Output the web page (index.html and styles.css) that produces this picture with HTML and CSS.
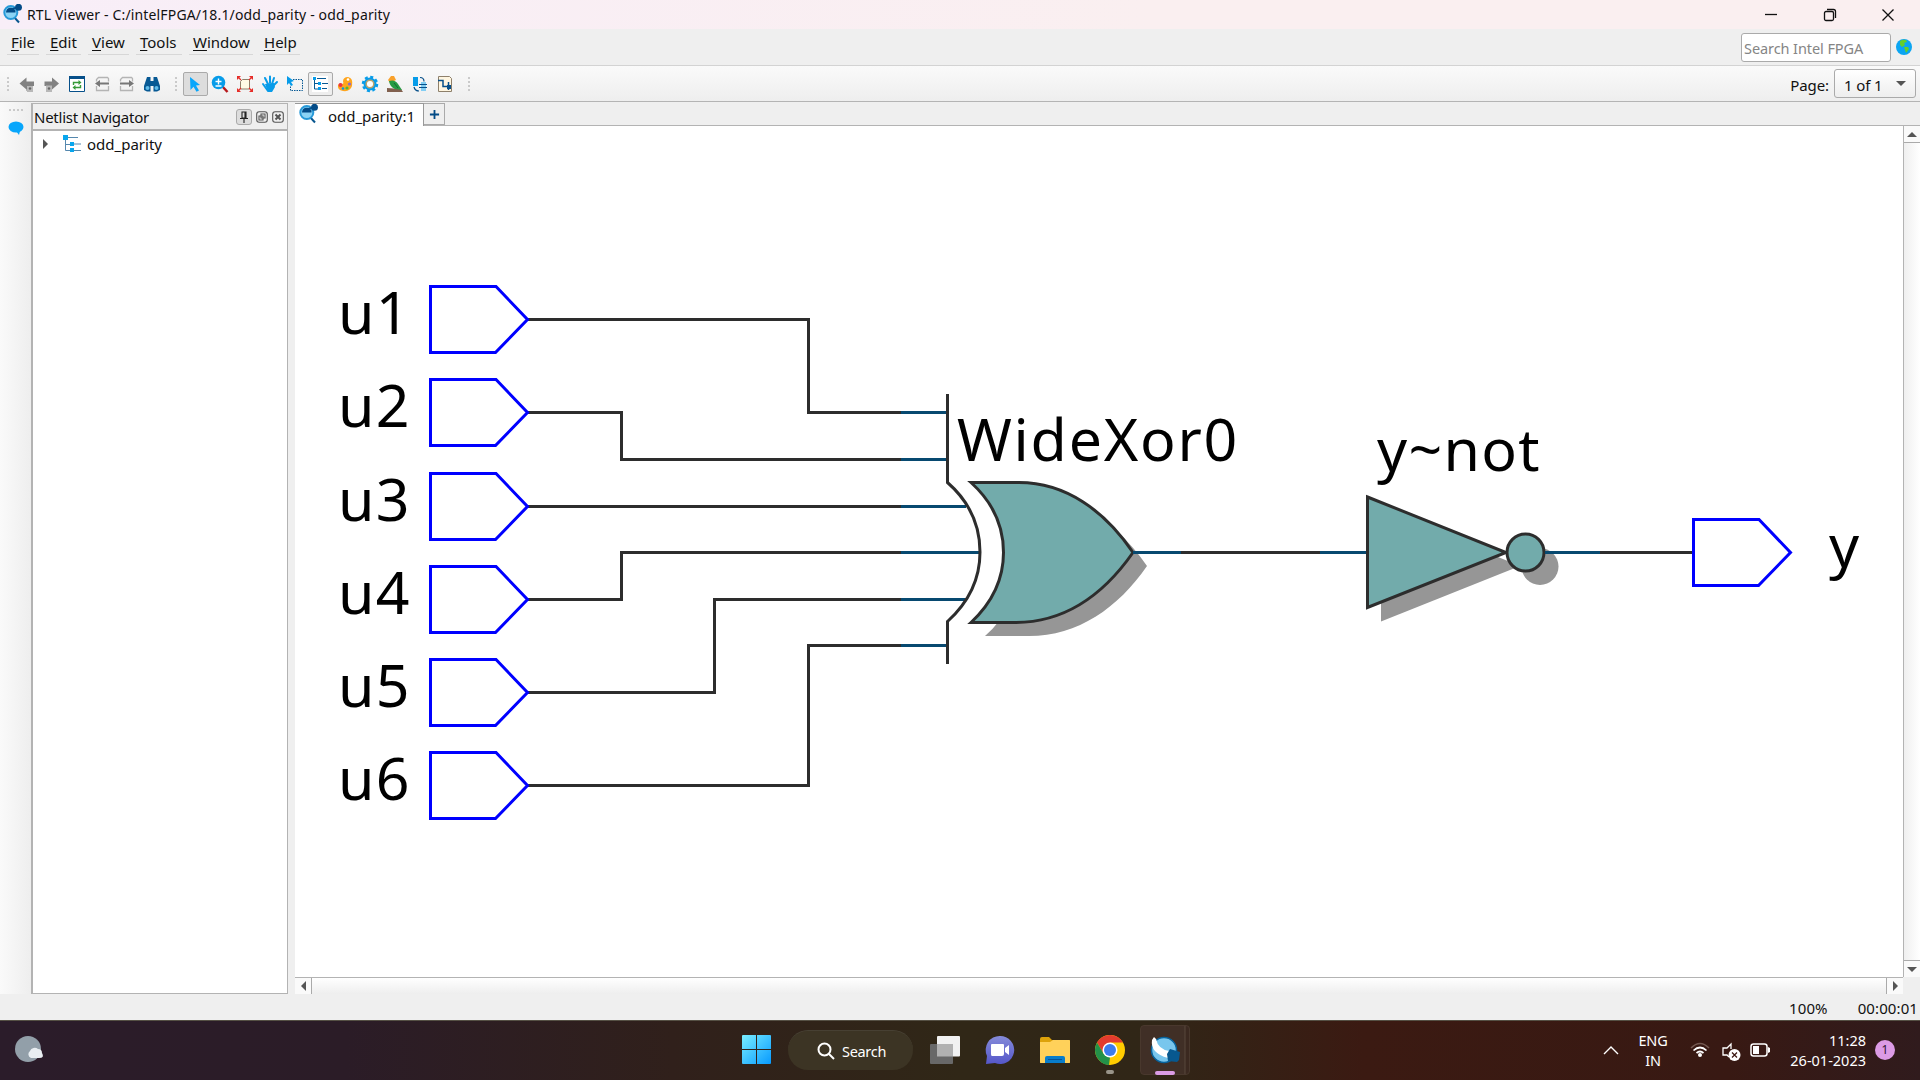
FILE: index.html
```html
<!DOCTYPE html>
<html lang="en">
<head>
<meta charset="utf-8">
<title>RTL Viewer</title>
<link rel="stylesheet" href="styles.css">
</head>
<body>
<svg class="defs" aria-hidden="true">
  <defs>
    <symbol id="viewer" viewBox="0 0 20 20">
      <path d="M11.500 12.500l5.500 6" stroke="#08568f" stroke-width="2"/>
      <circle cx="8.800" cy="8.500" r="6.500" fill="#8bd3f5" stroke="#2799d8" stroke-width="2"/>
      <path d="M4 8.500a5 5 0 0 1 9.500-2v2z" fill="#034b87"/>
      <path d="M10 5l6-2" stroke="#034b87" stroke-width="1.500"/>
      <circle cx="16.500" cy="3.300" r="3.500" fill="#034b87"/>
    </symbol>
    <symbol id="pin" viewBox="0 0 101 69">
      <path d="M1.500 1.500H67L98.500 34.500L66.500 67.500H1.500Z" fill="#fff" stroke="#00f" stroke-width="3"/>
    </symbol>
  </defs>
</svg>
<div class="window">
  <header class="titlebar">
    <svg class="app-icon"><use href="#viewer"/></svg>
    <span class="title">RTL Viewer - C:/intelFPGA/18.1/odd_parity - odd_parity</span>
    <div class="controls">
      <svg viewBox="0 0 14 14"><path d="M1 6.500h12"/></svg>
      <svg viewBox="0 0 14 14"><rect x="1.500" y="3.500" width="9" height="9" rx="1.500"/><path d="M4 1.500h6.500q2 0 2 2V10"/></svg>
      <svg viewBox="0 0 14 14"><path d="M1.500 1.500l11 11M12.500 1.500l-11 11"/></svg>
    </div>
  </header>
  <nav class="menubar">
    <span class="m-file"><u>F</u>ile</span><span class="m-edit"><u>E</u>dit</span><span class="m-view"><u>V</u>iew</span><span class="m-tools"><u>T</u>ools</span><span class="m-window"><u>W</u>indow</span><span class="m-help"><u>H</u>elp</span>
    <div class="search-box">Search Intel FPGA</div>
    <svg class="globe" viewBox="0 0 16 16"><circle cx="8" cy="8" r="8" fill="#0ba5f2"/><path d="M4 2q3-2 6-1l1 2-3 1 1 2-3 2-2-2zM8 8l4 0 1 2-3 4-1-3z" fill="#64cf2b"/></svg>
  </nav>
  <div class="toolbar">
    <i class="grip"></i>
    <div class="tools">
      <span><svg viewBox="0 0 20 20"><path d="M2.500 9.500l7-6v4H17v4.500h-3V17H9.500v-1.500z" fill="#828282"/><rect x="10" y="12" width="6" height="6" fill="#b8b8b8"/><circle cx="13" cy="14.500" r="1.200" fill="#666"/></svg></span>
      <span><svg viewBox="0 0 20 20"><path d="M17 9.500l-7-6v4H2.500v4.500H10v3.500z" fill="#828282"/><rect x="4" y="11.500" width="6" height="6.500" fill="#b8b8b8"/><circle cx="7" cy="14.500" r="1.200" fill="#666"/></svg></span>
      <span><svg viewBox="0 0 16 16"><path d="M.5.5h15v15H.5z" fill="#fff" stroke="#07508a"/><path d="M0 0h16v3H0z" fill="#07508a"/><path d="M4.500 9V6.500H11M11.500 9v2.500H5" fill="none" stroke="#379b39" stroke-width="1.400"/><path d="M9.500 4l3 2.500-3 2.500M6.500 9l-3 2.500 3 2.500" fill="#379b39"/></svg></span>
      <span><svg viewBox="0 0 20 20"><path d="M4.500 7.500v-2l2-2h9l1 1v3M4.500 12v4.500h12V12" fill="none" stroke="#b4b4b4" stroke-width="1.300"/><path d="M3 9.500L8 6v2.500h9v2H8V13z" fill="#777"/></svg></span>
      <span><svg viewBox="0 0 20 20"><path d="M3.500 7.500v-2l2-2h9l1 1v3M3.500 12v4.500h12V12" fill="none" stroke="#b4b4b4" stroke-width="1.300"/><path d="M17 9.500L12 6v2.500H3v2h9V13z" fill="#777"/></svg></span>
      <span><svg viewBox="0 0 20 20"><path d="M5 3h3.500v4h3V3H15l3 9v4l-3 1.500h-3.500V12h-3v5.500H5L2 16v-4z" fill="#075994"/><circle cx="5.500" cy="14" r="2" fill="#61bce9"/><circle cx="14.500" cy="14" r="2" fill="#61bce9"/></svg></span>
    </div>
    <i class="grip"></i>
    <div class="tools">
      <span class="pressed"><svg viewBox="0 0 20 20"><path d="M5 3l10 8-4 .5 3 5-2.500 1.300-3-5L5.500 16z" fill="#08a6fb"/></svg></span>
      <span><svg viewBox="0 0 20 20"><path d="M12 12l5.500 6" stroke="#b7191c" stroke-width="2.500"/><circle cx="8.500" cy="8.500" r="6.800" fill="#079ce9"/><path d="M5.500 7.500h6M8.500 4.500v6M5.500 12h6" stroke="#fff" stroke-width="1.400"/></svg></span>
      <span><svg viewBox="0 0 20 20"><path d="M7.500 5.500h7v9.500h-9V7.500z" fill="#fffbe5" stroke="#8e806b"/><path d="M2.500 2.500L6 6M17.500 2.500L14 6M2.500 17.500L6 14M17.500 17.500L14 14" stroke="#e62d28" stroke-width="1.200"/><path d="M2 6V2h4zM14 2h4v4zM2 14v4h4zM18 14v4h-4z" fill="#e62d28"/></svg></span>
      <span><svg viewBox="0 0 20 20"><path d="M8 17L3 10M8 10L5 4M10 9V2.500M12 10l2-6M12 13l5-5" stroke="#079ce9" stroke-width="2" stroke-linecap="round"/><path d="M5 10l9-1 1 4-3 5H8z" fill="#079ce9"/></svg></span>
      <span><svg viewBox="0 0 20 20"><path d="M8 5.500h9.500v11h-12V12" fill="none" stroke="#075994" stroke-dasharray="1.500 1"/><path d="M2 2l7 5-3 1 2 3-2 1-2-3-2 2z" fill="#079ce9"/></svg></span>
      <span class="pressed light"><svg viewBox="0 0 20 20"><path d="M2 2h16v16H2z" fill="#fff"/><path d="M4.500 5v10H9M4.500 9.500H9" fill="none" stroke="#075994"/><path d="M7 4.500h9M12 9.500h6M12 14.500h5" stroke="#075994" stroke-width="1.200"/><path d="M3 3h3v3H3zM8 8h3v3H8zM8 13h3v3H8z" fill="#079ce9"/></svg></span>
      <span><svg viewBox="0 0 20 20"><path d="M8 7.500q0-4.500 5-4.500 5.500 1 4 9-2 6-9 5-6-1-5-6 2-3 4-1 2 0 1-2.500" fill="#ffa51d"/><circle cx="5.500" cy="11" r="2" fill="#eb3445"/><circle cx="13" cy="5.500" r="1.300" fill="#fff"/><circle cx="14.500" cy="10" r="1.600" fill="#8b6ac9"/><circle cx="12" cy="14" r="1.600" fill="#4fb936"/><circle cx="8" cy="14.500" r="1.300" fill="#0797e6"/></svg></span>
      <span><svg viewBox="0 0 20 20"><circle cx="10" cy="10" r="6.500" fill="#079ce9"/><circle cx="10" cy="10" r="7" fill="none" stroke="#079ce9" stroke-width="2.500" stroke-dasharray="3 2.500"/><circle cx="10" cy="10" r="3.800" fill="#fff" stroke="#bfa36a" stroke-width="1.500"/></svg></span>
      <span><svg viewBox="0 0 20 20"><path d="M2 14l14 1 2 3H2z" fill="#81604e"/><path d="M3 6l3-4h3l2 4-6 3z" fill="#f9a12b"/><path d="M4 7q6-2 9 3l4 6-7-1q-5-2-6-8" fill="#269c43"/><path d="M9 9l4 5" stroke="#116a32"/></svg></span>
      <span><svg viewBox="0 0 20 20"><path d="M3 3h5v9H3z" fill="#079ce9"/><path d="M11 8h5v9h-5z" fill="#82cef4"/><path d="M10 3.500q4 0 4 4M4 13q1 4 5 4M9 10.500h8M9 13.500h8" fill="none" stroke="#07508a" stroke-width="1.200"/></svg></span>
      <span><svg viewBox="0 0 20 20"><path d="M3.500 2.500h11l2 2v13h-13z" fill="#fff6e1" stroke="#8e806b"/><path d="M3 6.500h5v6h8M13.500 8v8" fill="none" stroke="#07508a" stroke-width="1.500"/><path d="M12 11h4v4h-4z" fill="#07508a"/></svg></span>
    </div>
    <i class="grip"></i>
    <span class="page-label">Page:</span>
    <div class="page-select">1 of 1<i class="tri down"></i></div>
  </div>

  <main class="workspace">
    <aside class="dock"><i></i><svg viewBox="0 0 16 14"><ellipse cx="8" cy="6" rx="7.500" ry="5.500" fill="#08a6fb"/><path d="M8 10h4l-1 4z" fill="#08a6fb"/></svg></aside>
    <section class="navigator">
      <header><span>Netlist Navigator</span>
        <b class="pin-btn"><svg viewBox="0 0 12 14"><path d="M4 2h4v6H4zM2 8.500h8M6 8v5M7 2v6" fill="none" stroke="#222"/></svg></b>
        <svg viewBox="0 0 12 12"><rect x=".7" y=".7" width="10.600" height="10.600" rx="2.500"/><path d="M5 3h4v4H5zM3 5h4v4H3z"/></svg>
        <svg viewBox="0 0 12 12"><rect x=".7" y=".7" width="10.600" height="10.600" rx="2.500"/><path d="M3.500 3.500l5 5M8.500 3.500l-5 5" stroke-width="2"/></svg>
      </header>
      <div class="tree-row"><i class="tri right"></i><svg viewBox="0 0 18 18"><path d="M2.500 4v11.500H8M2.500 9.500H8M5 2.500h10M11 9h7M11 15.500h7" fill="none" stroke="#5588ae"/><path d="M0 0h5v5H0zM7 7h4v4H7zM7 13h4v4H7z" fill="#08a6ed"/></svg><span>odd_parity</span></div>
    </section>
    <section class="document">
      <div class="tabs"><div class="tab"><svg><use href="#viewer"/></svg><span>odd_parity:1</span></div><div class="add-tab"><svg viewBox="0 0 12 12"><path d="M1 6h10M6 1v10" stroke="#034b87" stroke-width="2"/></svg></div></div>
      <svg class="schematic" viewBox="295 126 1608 851">
        <g class="wire">
          <path d="M528 319.500H808.500V412.500H902M528 412.500H621.500V459.500H902M528 506.500H902M528 599.500H621.500V552.500H902M528 692.500H714.500V599.500H902M528 785.500H808.500V645.500H902M1180 552.500H1320M1600 552.500H1693"/>
          <path class="port" d="M901 412.500H947M901 459.500H947M901 506.500H966M901 552.500H981M901 599.500H966M901 645.500H947M1320 552.500H1367"/>
          <path d="M947.500 394V482.500Q980 511 980 552Q980 592 947.500 621.500V664"/>
        </g>
        <g class="pins">
          <use href="#pin" x="429" y="285" width="101" height="69"/><use href="#pin" x="429" y="378" width="101" height="69"/><use href="#pin" x="429" y="472" width="101" height="69"/><use href="#pin" x="429" y="565" width="101" height="69"/><use href="#pin" x="429" y="658" width="101" height="69"/><use href="#pin" x="429" y="751" width="101" height="69"/><use href="#pin" x="1692" y="518" width="101" height="69"/>
        </g>
        <path class="shadow" d="M985 496H1029C1078 496 1119 525 1147 566C1118 608 1078 636 1029 636H985Q1017 608 1017 566Q1017 524 985 496Z"/>
        <path class="gate" d="M971 482.500H1019C1066 482.500 1105 511 1133 552.500C1104 594 1066 622.500 1015 622.500H971Q1003.500 592 1003.500 552.500Q1003.500 512 971 482.500Z"/>
        <path class="shadow" d="M1381 509L1520 566L1381 621.500Z"/><circle class="shadow" cx="1540" cy="566.500" r="18.500"/>
        <path class="gate" d="M1367.500 497L1506 552.500L1367.500 607.500Z"/><circle class="gate" cx="1525.500" cy="552.500" r="18.500"/>
        <path class="wire port" d="M1133 552.500H1181M1545 552.500H1600"/>
        <g class="labels">
          <text x="338" y="334">u1</text><text x="338" y="427">u2</text><text x="338" y="521">u3</text><text x="338" y="614">u4</text><text x="338" y="707">u5</text><text x="338" y="800">u6</text>
          <text class="gate-name" x="957" y="461">WideXor0</text><text x="1377" y="471">y~not</text><text x="1829" y="567">y</text>
        </g>
      </svg>
      <div class="vscroll"><b><i class="tri up"></i></b><b><i class="tri down"></i></b></div>
      <div class="hscroll"><b><i class="tri left"></i></b><b><i class="tri right"></i></b></div>
    </section>
  </main>
  <footer class="status"><span>100%</span><span>00:00:01</span></footer>
</div>

<footer class="taskbar">
  <svg class="weather" viewBox="0 0 30 28"><circle cx="13" cy="13" r="13" fill="#929fa9"/><path d="M16 22a4 4 0 0 1-1-7 5 5 0 0 1 8-2q4 0 4 4 3 5-3 5z" fill="#e9eef2"/></svg>
  <div class="apps">
    <svg class="start" viewBox="0 0 30 30"><defs><linearGradient id="win" gradientUnits="userSpaceOnUse" x2="29" y2="29"><stop stop-color="#79eeff"/><stop offset="1" stop-color="#079aff"/></linearGradient></defs><path d="M0 1q0-1 1-1h13v14H0zM15 0h13q1 0 1 1v13H15zM0 15h14v14H1q-1 0-1-1zM15 15h14v13q0 1-1 1H15z" fill="url(#win)"/></svg>
    <div class="search"><svg viewBox="0 0 18 18"><circle cx="7.500" cy="7.500" r="6" fill="none" stroke="#fff" stroke-width="2"/><path d="M12 12l5 5" stroke="#fff" stroke-width="2"/></svg><span>Search</span></div>
    <svg class="task" viewBox="0 0 30 28"><rect x="7" width="23" height="20.500" rx="1" fill="#f1f1f1"/><rect y="8" width="23" height="20" rx="1" fill="#686868"/><path d="M7 8h16v12.500H7z" fill="#b1b1b1"/></svg>
    <svg class="chat" viewBox="0 0 30 30"><defs><linearGradient id="chatg" x2="0" y2="1"><stop stop-color="#858bd9"/><stop offset="1" stop-color="#5557c9"/></linearGradient></defs><path d="M15 1a14 14 0 1 1-5 27L1 29l1-8A14 14 0 0 1 15 1" fill="url(#chatg)"/><path d="M7 9h11q1 0 1 1v9q0 2-2 2H7q-1 0-1-2v-9q0-1 1-1M20 13l4-3v10l-4-3z" fill="#fff"/></svg>
    <svg class="folder" viewBox="0 0 30 28"><path d="M0 3q0-2 2-2h7l3 3h17q1 0 1 1v22H0z" fill="#dda20a"/><path d="M0 6h10l3-2h16q1 0 1 1v21q0 1-1 1H1q-1 0-1-1z" fill="#ffd15a"/><path d="M5 27v-5q0-2 2-2h16q2 0 2 2v5z" fill="#087dcb"/><path d="M8 23.500h14" stroke="#075397"/></svg>
    <div class="chrome"><svg viewBox="0 0 30 30"><circle cx="15" cy="15" r="15" fill="#fc0"/><path d="M2 7.500A15 15 0 0 1 28 7.500H15L8.500 18.500z" fill="#e33b2e"/><path d="M2 7.500L8.500 18.500L15 22.500L14 30A15 15 0 0 1 2 7.500" fill="#239149"/><circle cx="15" cy="15" r="7.500" fill="#fff"/><circle cx="15" cy="15" r="6" fill="#3c7ced"/></svg><i></i></div>
    <div class="active-app"><svg viewBox="0 0 30 26"><circle cx="14" cy="13" r="12.500" fill="#78c6ed" stroke="#07639d" stroke-width="1.500"/><path d="M2 3q-2 13 16 18l1-7Q8 12 6 2L4 0z" fill="#fff"/><path d="M17 17l3-5 10 3-1 8-2 2-9-1z" fill="#07588f"/></svg><i></i></div>
  </div>
  <div class="tray">
    <svg class="chev" viewBox="0 0 16 10"><path d="M1 9l7-7 7 7" fill="none" stroke="#fff" stroke-width="1.400"/></svg>
    <div class="lang">ENG<br>IN</div>
    <svg class="wifi" viewBox="0 0 20 16"><path d="M1 6q9-9 18 0" fill="none" stroke="#735851" stroke-width="1.500"/><path d="M3.500 8.500q6.500-6 13 0M6.500 11q3.500-3 7 0" fill="none" stroke="#fff" stroke-width="1.700"/><circle cx="10" cy="13" r="2" fill="#fff"/></svg>
    <svg class="sound" viewBox="0 0 19 18"><path d="M9 6V1L5 5H1v7h4l2 2" fill="none" stroke="#fff" stroke-width="1.300"/><circle cx="12.500" cy="12" r="6" fill="#fff"/><path d="M10 9.500l5 5M15 9.500l-5 5" stroke="#3b1812" stroke-width="1.200"/></svg>
    <svg class="battery" viewBox="0 0 20 14"><rect x="1" y="1" width="16" height="12" rx="2.500" fill="none" stroke="#fff" stroke-width="1.500"/><path d="M3 3h6v8H3zM18 4l2 1v4l-2 1z" fill="#fff"/></svg>
    <div class="clock">11:28<br>26-01-2023</div><div class="badge">1</div>
  </div>
</footer>
</body>
</html>
```
FILE: styles.css
```css
* { box-sizing: border-box; }
body { margin: 0; width: 1920px; height: 1080px; overflow: hidden; font: 15px/20px "Noto Sans", sans-serif; color: #111; background: #efefef; }
svg { display: block; overflow: visible; }
.defs { width: 0; height: 0; position: absolute; }
.window { height: 1020px; display: flex; flex-direction: column; }
.titlebar { height: 29px; background: linear-gradient(90deg, #f8eef8, #faeff0 60%); display: flex; align-items: center; }
.app-icon { width: 20px; height: 20px; margin: 0 5px 1px 2px; }
.title { font-size: 14px; letter-spacing: .15px; }
.controls { margin-left: auto; display: flex; gap: 44.5px; padding-right: 25px; }
.controls svg { width: 14px; height: 14px; fill: none; stroke: #111; stroke-width: 1.3; }
.menubar { height: 37px; border-bottom: 1px solid #d3d3d3; display: flex; padding-left: 7px; gap: 7px; }
.menubar span { height: 26px; padding: 3px 4px 0; border-bottom: 1px solid #d7d7d7; }
.menubar u { text-underline-offset: 2px; text-decoration-thickness: 1px; text-decoration-skip-ink: none; }
.m-file { width: 32px; }
.m-edit { width: 35px; }
.m-view { width: 41px; }
.m-tools { width: 46px; }
.m-window { width: 64px; }
.m-help { width: 40px; }
.search-box { width: 150px; height: 29px; margin: 4px 5px 0 auto; border: 1px solid #aaa; border-radius: 3px; background: #fff; color: #858585; padding: 4px 2px; font-size: 14.5px; letter-spacing: -.08px; white-space: nowrap; }
.globe { width: 16px; height: 16px; margin: 10px 8px 0 -7px; }
.toolbar { height: 36px; background: linear-gradient(#fafafa, #eee); border-bottom: 1px solid #b4b4b4; display: flex; align-items: center; padding: 0 4px 0 6px; }
.grip { width: 4px; height: 16px; background: radial-gradient(circle, #bbb .6px, transparent 1px) 0 0 / 4px 4px; }
.tools { display: flex; margin: 0 0 0 5px; }
.tools + .grip { margin-left: 9px; }
.tools + .grip + .tools { margin-left: 5px; }
.tools > span { width: 25px; height: 24px; display: grid; place-items: center; }
.tools svg { width: 20px; height: 20px; margin-left: -2px; fill: none; }
.tools svg[viewBox="0 0 16 16"] { width: 16px; height: 16px; }
.tools .pressed { border: 1px solid #aaa; border-radius: 2px; background: #ddd; }
.tools .light { background: #eee; }
.page-label { margin-left: auto; margin-top: 3px; }
.page-select { width: 82px; height: 29px; margin-left: 5px; border: 1px solid #aaa; border-radius: 3px; background: linear-gradient(#fff, #eee); padding: 7px 9px 5px; display: flex; align-items: center; justify-content: space-between; }
.page-select .tri { margin-top: -2px; }
.page-label, .page-select { letter-spacing: -.1px; }
.tri { display: block; width: 0; height: 0; border: 5px solid transparent; }
.tri.down { border-top-color: #555; border-bottom: 0; }
.tri.up { border-bottom-color: #555; border-top: 0; }
.tri.left { border-right-color: #555; border-left: 0; }
.tri.right { border-left-color: #555; border-right: 0; }
.workspace { height: 892px; display: flex; }
.dock { width: 31px; background: linear-gradient(90deg, #fafafa, #eee); padding: 6px 0 0 8px; }
.dock i { display: block; width: 17px; height: 5px; background: radial-gradient(circle, #bbb .6px, transparent 1px) 0 0 / 4px 4px; }
.dock svg { width: 16px; height: 14px; margin-top: 8px; }
.navigator { width: 257px; height: 891px; margin: 1px 7px 0 0; border: 1px solid #b3b3b3; border-left-width: 2px; background: #fff; }
.navigator header { height: 27px; background: #efefef; border-bottom: 2px solid #b3b3b3; padding: 0 3px 0 1px; display: flex; align-items: center; letter-spacing: -.25px; }
.navigator header span { margin: 1px auto 0 0; }
.navigator header svg { width: 12px; height: 12px; margin-left: 4px; fill: none; stroke: #555; stroke-width: 1.1; }
.pin-btn { width: 16px; height: 16px; border: 1px solid #aaa; border-radius: 3px; background: #ddd; display: grid; place-items: center; }
.navigator .pin-btn svg { margin: 0; height: 14px; }
.tree-row { height: 26px; padding-left: 10px; display: flex; align-items: center; }
.tree-row svg { width: 18px; height: 18px; margin: 0 6px 1px 15px; }
.tree-row span { margin-top: 0; }
.document { width: 1625px; display: grid; grid-template: 24px 851px 17px / 1608px 17px; }
.tabs { grid-column: 1 / 3; display: flex; height: 24px; border-bottom: 1px solid #b3b3b3; padding-top: 1px; }
.tab { width: 129px; height: 24px; border: 1px solid #999; border-left: 0; background: #fff; display: flex; }
.tab svg { width: 20px; height: 20px; margin-left: 3px; }
.tab span { margin: 2px 0 0 10px; letter-spacing: -.05px; }
.add-tab { width: 21px; height: 22px; border: 1px solid #aaa; border-left: 0; display: grid; place-items: center; }
.add-tab svg { width: 11px; height: 11px; }
.schematic { width: 1608px; height: 851px; background: #fff; overflow: hidden; }
.wire { fill: none; stroke: #2d2d2d; stroke-width: 3; }
.port { stroke: #074970; }
.gate { fill: #72abab; stroke: #2d2d2d; stroke-width: 3; }
.shadow { fill: #969696; }
.labels { font-size: 59px; letter-spacing: 1.3px; fill: #000; }
.gate-name { letter-spacing: 1.75px; }
.vscroll { border-left: 1px solid #b3b3b3; background: linear-gradient(90deg, #efefef, #fff); display: flex; flex-direction: column; justify-content: space-between; }
.vscroll b { height: 17px; display: grid; place-items: center; border-bottom: 1px solid #aaa; background: #fafafa; }
.vscroll b + b { border-top: 1px solid #aaa; border-bottom: 0; }
.hscroll { border-top: 1px solid #b3b3b3; display: flex; justify-content: space-between; background: linear-gradient(#fff, #eee); }
.hscroll b { width: 17px; display: grid; place-items: center; border-right: 1px solid #aaa; background: #fafafa; }
.hscroll b + b { border-left: 1px solid #aaa; border-right: 0; }
.status { height: 26px; display: flex; justify-content: flex-end; gap: 30px; padding: 4px 2px 0 0; letter-spacing: .1px; }
.taskbar { height: 60px; color: #fff; border-top: 1px solid #555044; background: linear-gradient(90deg, #2b1c2a, #2b1c27 18%, #30201b 35%, #302717 50%, #302617 60%, #3b1a12 71%, #381913 90%, #301b1d); display: flex; align-items: center; font-size: 15px; padding-bottom: 1px; }
.weather { width: 30px; height: 28px; margin-left: 15px; }
.apps { margin-left: 697px; display: flex; align-items: center; }
.start { width: 30px; height: 30px; }
.search { width: 125px; height: 40px; margin-left: 16px; border-radius: 20px; background: #3c3424; border-top: 1px solid #474033; display: flex; align-items: center; padding-left: 29px; gap: 7px; font-size: 14.5px; letter-spacing: -.3px; }
.search svg { width: 18px; height: 18px; }
.task { width: 30px; height: 28px; margin-left: 17px; }
.chat { width: 30px; height: 30px; margin-left: 25px; }
.folder { width: 30px; height: 28px; margin-left: 25px; }
.chrome { width: 30px; height: 50px; margin-left: 25px; padding-top: 10px; }
.chrome svg { width: 30px; height: 30px; }
.chrome i { display: block; width: 8px; height: 4px; margin: 5px auto 0; border-radius: 2px; background: #999489; }
.active-app { width: 50px; height: 50px; margin-left: 15px; padding: 11px 0 0 9px; border: 1px solid #49382d; border-radius: 4px; background: linear-gradient(90deg, #402f26 43px, #57473b 44px, #3b2920 45px); }
.active-app svg { width: 30px; height: 26px; }
.active-app i { display: block; width: 20px; height: 4px; margin: 8px 0 0 5px; border-radius: 2px; background: #da9ce5; }
.tray { margin-left: auto; display: flex; align-items: center; padding-right: 25px; }
.chev { width: 16px; height: 10px; }
.lang { width: 36px; margin-left: 16px; text-align: center; font-size: 14.5px; letter-spacing: -.2px; }
.wifi { width: 20px; height: 16px; margin-left: 19px; }
.sound { width: 19px; height: 18px; margin: 4px 0 0 12px; }
.battery { width: 20px; height: 14px; margin-left: 9px; }
.clock { width: 86px; margin-left: 10px; text-align: right; font-size: 14.5px; letter-spacing: 0; }
.badge { width: 20px; height: 20px; margin-left: 9px; border-radius: 50%; background: #dc9be5; color: #31152f; text-align: center; font-size: 12px; }
```
